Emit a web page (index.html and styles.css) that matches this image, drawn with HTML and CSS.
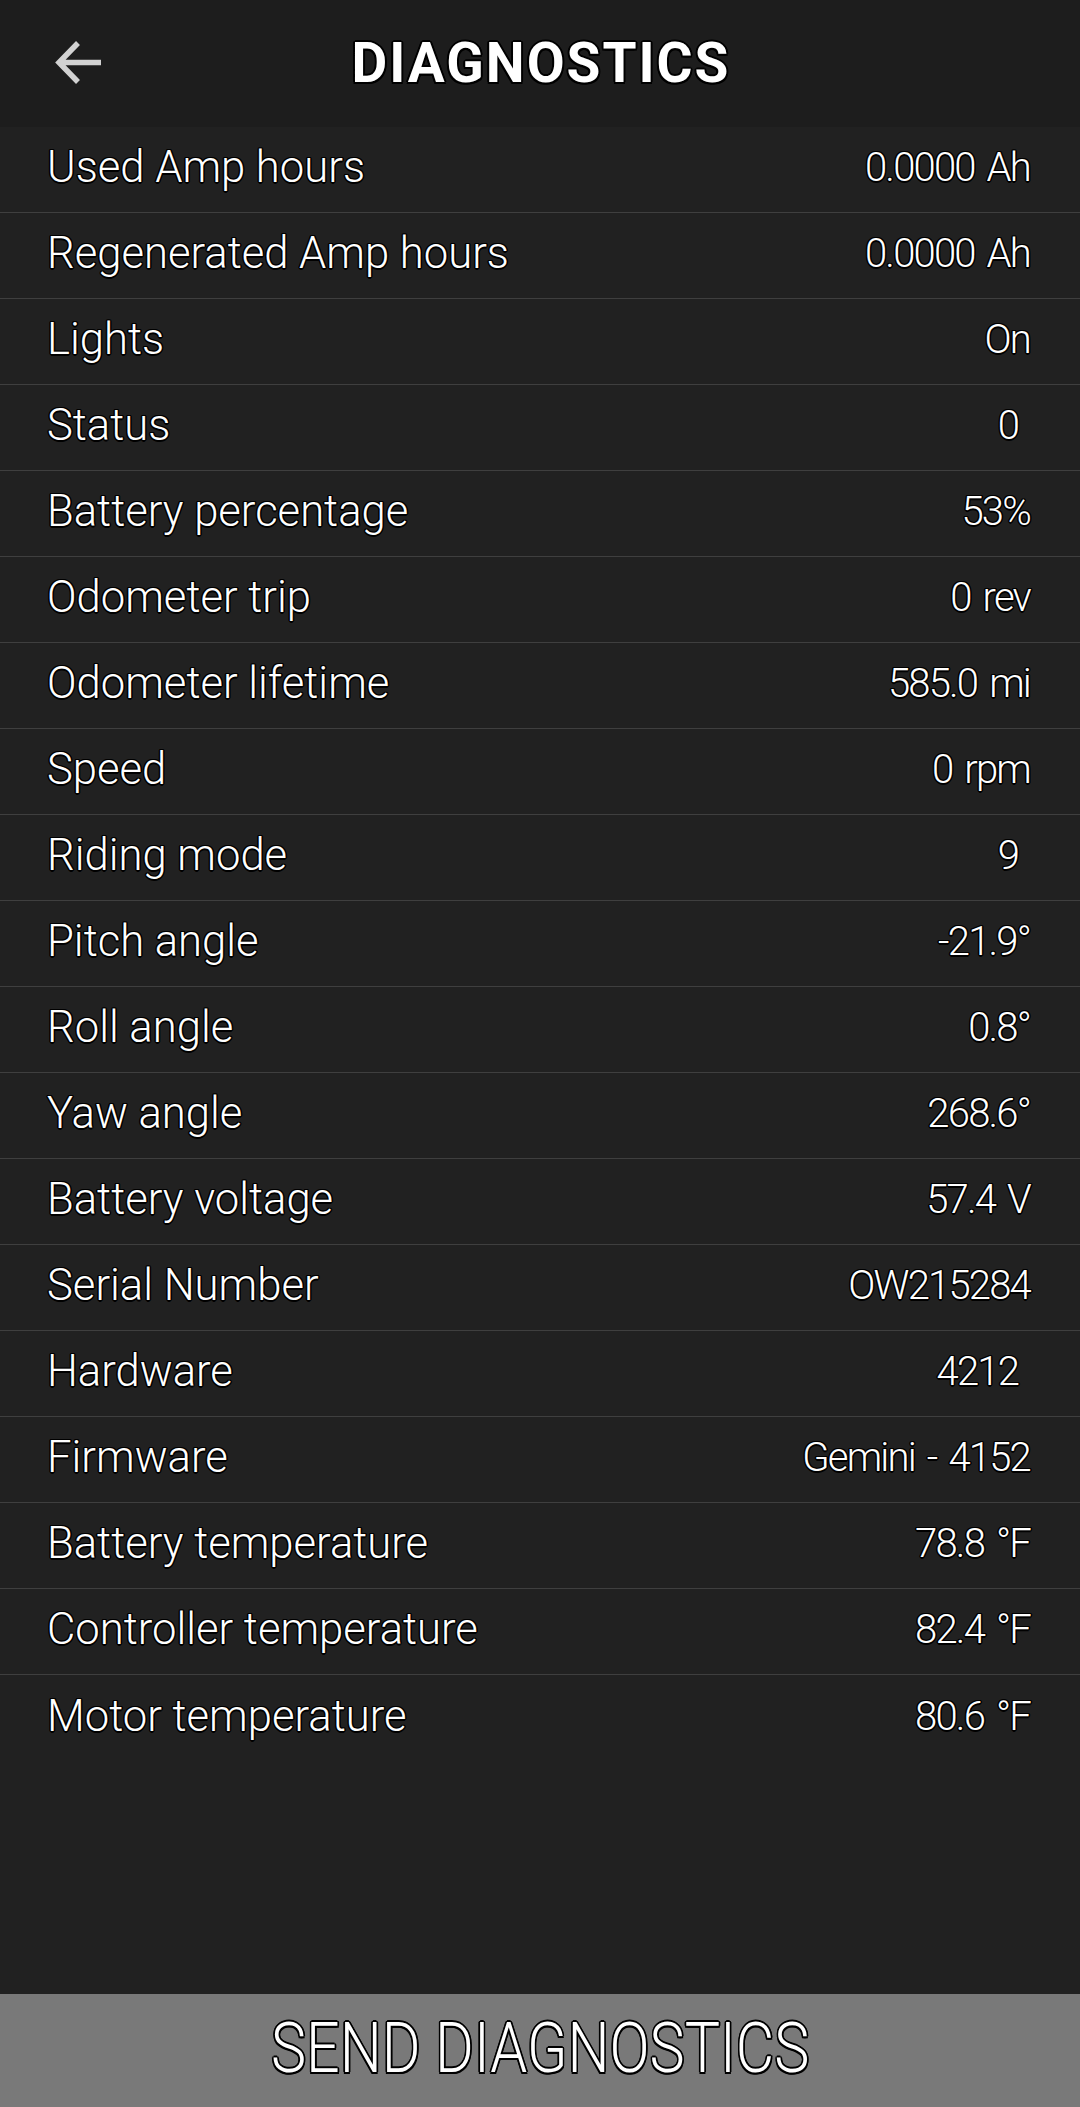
FILE: index.html
```html
<!DOCTYPE html>
<html>
<head>
<meta charset="utf-8">
<link rel="stylesheet" href="styles.css">
</head>
<body>
<div class="app">
  <header class="topbar">
    <button class="back" aria-label="Back">
      <svg width="52" height="50" viewBox="0 0 52 50"><path d="M47 21.5 H6 M24 2 L5 21.5 L24 41" fill="none" stroke="#d2d2d2" stroke-width="5.5" stroke-linecap="butt" stroke-linejoin="miter"/></svg>
    </button>
    <h1 class="title">DIAGNOSTICS</h1>
  </header>
  <ul class="list">
    <li class="row"><span class="label">Used Amp hours</span><span class="value">0.0000 Ah</span></li>
    <li class="row"><span class="label">Regenerated Amp hours</span><span class="value">0.0000 Ah</span></li>
    <li class="row"><span class="label">Lights</span><span class="value">On</span></li>
    <li class="row"><span class="label">Status</span><span class="value">0&nbsp;</span></li>
    <li class="row"><span class="label">Battery percentage</span><span class="value">53%</span></li>
    <li class="row"><span class="label">Odometer trip</span><span class="value">0 rev</span></li>
    <li class="row"><span class="label">Odometer lifetime</span><span class="value">585.0 mi</span></li>
    <li class="row"><span class="label">Speed</span><span class="value">0 rpm</span></li>
    <li class="row"><span class="label">Riding mode</span><span class="value">9&nbsp;</span></li>
    <li class="row"><span class="label">Pitch angle</span><span class="value">-21.9°</span></li>
    <li class="row"><span class="label">Roll angle</span><span class="value">0.8°</span></li>
    <li class="row"><span class="label">Yaw angle</span><span class="value">268.6°</span></li>
    <li class="row"><span class="label">Battery voltage</span><span class="value">57.4 V</span></li>
    <li class="row"><span class="label">Serial Number</span><span class="value">OW215284</span></li>
    <li class="row"><span class="label">Hardware</span><span class="value">4212&nbsp;</span></li>
    <li class="row"><span class="label">Firmware</span><span class="value">Gemini - 4152</span></li>
    <li class="row"><span class="label">Battery temperature</span><span class="value">78.8 °F</span></li>
    <li class="row"><span class="label">Controller temperature</span><span class="value">82.4 °F</span></li>
    <li class="row"><span class="label">Motor temperature</span><span class="value">80.6 °F</span></li>
  </ul>
  <div class="spacer"></div>
  <button class="send"><span class="send-text">SEND DIAGNOSTICS</span></button>
</div>
</body>
</html>
```
FILE: styles.css
```css
* { box-sizing: border-box; }
html, body { margin: 0; padding: 0; }
body {
  background: #212121;
  font-family: Roboto, "Liberation Sans", sans-serif;
  color: #fff;
}
.app {
  display: flex;
  flex-direction: column;
  height: 2107px;
  width: 1080px;
}
.topbar {
  height: 127px;
  background: #1d1d1d;
  display: flex;
  align-items: center;
  justify-content: center;
  position: relative;
}
.back {
  position: absolute;
  left: 54px;
  top: 41px;
  padding: 0;
  margin: 0;
  border: 0;
  background: none;
  display: block;
  line-height: 0;
}
.title {
  margin: 0;
  font-size: 55px;
  font-weight: 700;
  letter-spacing: 2px;
  line-height: 1;
  padding-left: 2px;
  text-shadow: -1.5px -1.5px 0 #000, 1.5px -1.5px 0 #000, -1.5px 1.5px 0 #000, 1.5px 1.5px 0 #000, 0 2px 0 #000, 0 -2px 0 #000, 2px 0 0 #000, -2px 0 0 #000;
}
.list {
  list-style: none;
  margin: 0;
  padding: 0;
}
.row {
  height: 86px;
  border-bottom: 1px solid #3f3f3f;
  display: flex;
  align-items: center;
  justify-content: space-between;
  padding: 0 50px 4px 47px;
  font-weight: 300;
  text-shadow: -1px -1px 0 #000, 1px -1px 0 #000, -1px 1px 0 #000, 1px 1px 0 #000, 0 1.5px 0 #000, 0 -1.5px 0 #000, 1.5px 0 0 #000, -1.5px 0 0 #000;
}
.row:last-child { border-bottom: 0; }
.label { font-size: 43.6px; }
.value {
  white-space: pre;
  font-size: 40px;
  letter-spacing: -1.8px;
  word-spacing: 4px;
}
.spacer { flex: 1; }
.send {
  height: 113px;
  background: #797979;
  border: 0;
  margin: 0;
  padding: 0 0 6px;
  display: flex;
  align-items: center;
  justify-content: center;
  font-family: Roboto, "Liberation Sans", sans-serif;
  color: #fff;
}
.send-text {
  display: inline-block;
  font-size: 70px;
  font-weight: 300;
  transform: scaleX(0.846);
  text-shadow: -1.5px -1.5px 0 #000, 1.5px -1.5px 0 #000, -1.5px 1.5px 0 #000, 1.5px 1.5px 0 #000, 0 2px 0 #000, 0 -2px 0 #000, 2px 0 0 #000, -2px 0 0 #000;
}
```
